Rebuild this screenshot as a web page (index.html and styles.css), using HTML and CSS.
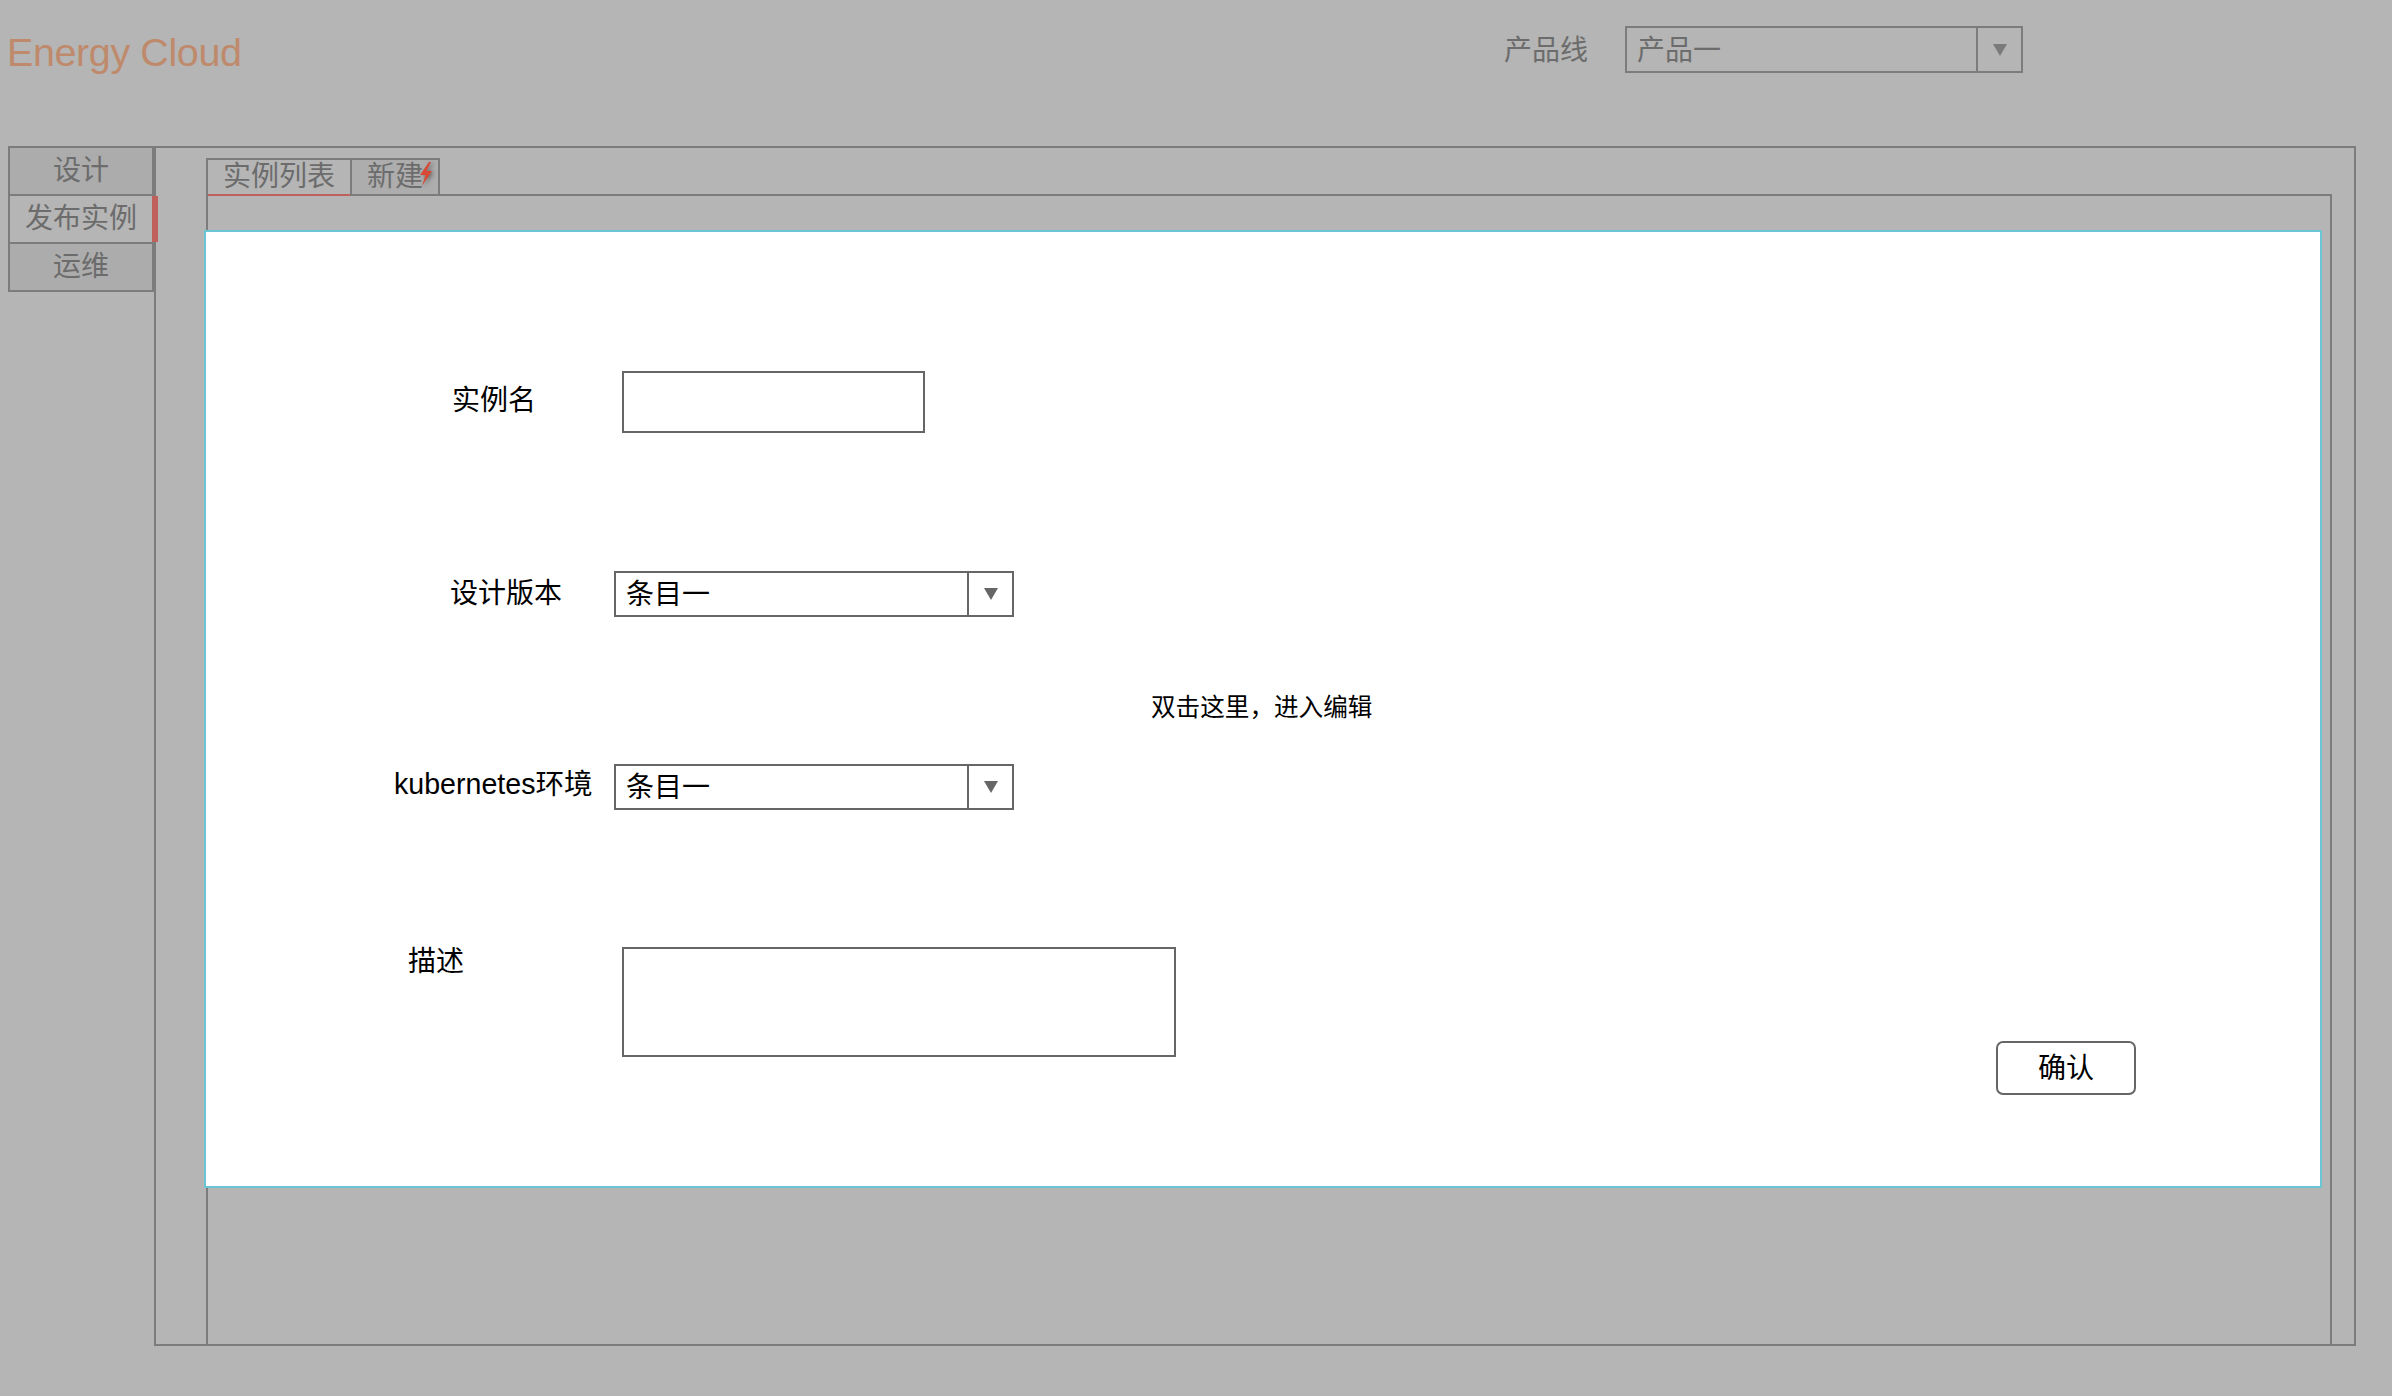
FILE: index.html
```html
<!DOCTYPE html>
<html lang="zh-CN">
<head>
<meta charset="utf-8">
<title>Energy Cloud</title>
<link rel="stylesheet" href="styles.css">
</head>
<body>
<div class="page">
  <header class="topbar">
    <div class="logo">Energy Cloud</div>
    <div class="product">
      <span class="product-label">产品线</span>
      <div class="select select--header">
        <span class="select-value">产品一</span>
        <span class="select-btn"></span>
      </div>
    </div>
  </header>
  <div class="main-row">
    <nav class="sidenav">
      <div class="nav-item">设计</div>
      <div class="nav-item nav-item--active">发布实例</div>
      <div class="nav-item">运维</div>
    </nav>
    <main class="frame">
      <div class="tabs">
        <div class="tab tab--active">实例列表</div>
        <div class="tab tab--new">新建<svg class="bolt" width="16" height="24" viewBox="0 0 16 24"><polygon points="11,0 2,13 7.5,13 4,24 14,9 8.5,9 13,0" fill="#d64a36"/></svg></div>
      </div>
      <div class="panel">
        <div class="dialog">
          <div class="row row--name">
            <span class="label">实例名</span>
            <div class="input"></div>
          </div>
          <div class="row row--version">
            <span class="label">设计版本</span>
            <div class="select select--form">
              <span class="select-value">条目一</span>
              <span class="select-btn"></span>
            </div>
          </div>
          <div class="hint">双击这里，进入编辑</div>
          <div class="row row--k8s">
            <span class="label label--latin">kubernetes环境</span>
            <div class="select select--form">
              <span class="select-value">条目一</span>
              <span class="select-btn"></span>
            </div>
          </div>
          <div class="row row--desc">
            <span class="label">描述</span>
            <div class="textarea"></div>
            <button class="confirm" type="button">确认</button>
          </div>
        </div>
      </div>
    </main>
  </div>
</div>
</body>
</html>
```
FILE: styles.css
```css
html, body {
  margin: 0;
  padding: 0;
}
body {
  background: #b5b5b5;
  font-family: "Noto Sans CJK SC", sans-serif;
  width: 2392px;
  height: 1396px;
  overflow: hidden;
}
.page {
  display: flex;
  flex-direction: column;
}

/* ---------- top bar ---------- */
.topbar {
  display: flex;
  align-items: flex-start;
  height: 146px;
  box-sizing: border-box;
  padding: 0 369px 0 7px;
}
.logo {
  font-family: "Liberation Sans", Arial, sans-serif;
  font-size: 39.5px;
  letter-spacing: -0.4px;
  line-height: 45px;
  color: #bf8a6c;
  margin-top: 30px;
}
.product {
  margin-left: auto;
  margin-top: 26px;
  display: flex;
  align-items: center;
  gap: 37px;
}
.product-label {
  font-size: 28px;
  line-height: 28px;
  color: #6c6c6c;
  margin-bottom: 4px;
}

/* ---------- select ---------- */
.select {
  display: flex;
  box-sizing: border-box;
  border: 2px solid #666;
  background: #fff;
  color: #000;
}
.select-value {
  flex: 1;
  display: flex;
  align-items: center;
  padding-left: 10px;
  font-size: 28px;
  line-height: 28px;
  padding-bottom: 4px;
}
.select-btn {
  width: 45px;
  box-sizing: border-box;
  border-left: 2px solid #666;
  display: flex;
  align-items: center;
  justify-content: center;
}
.select-btn::before {
  content: "";
  border-left: 7px solid transparent;
  border-right: 7px solid transparent;
  border-top: 12px solid #666;
}
.select--header {
  width: 398px;
  height: 47px;
  background: transparent;
  border-color: #7c7c7c;
  color: #6c6c6c;
}
.select--header .select-btn {
  border-left-color: #7c7c7c;
}
.select--header .select-btn::before {
  border-top-color: #7a7a7a;
}
.select--form {
  width: 400px;
  height: 46px;
}

/* ---------- layout ---------- */
.main-row {
  display: flex;
  align-items: flex-start;
  padding-left: 8px;
}
.sidenav {
  width: 146px;
  box-sizing: border-box;
  border: 2px solid #7c7c7c;
  border-bottom: none;
}
.nav-item {
  position: relative;
  height: 48px;
  box-sizing: border-box;
  border-bottom: 2px solid #7c7c7c;
  background: #acacac;
  color: #6c6c6c;
  font-size: 28px;
  line-height: 40px;
  text-align: center;
}
.nav-item--active {
  background: #b5b5b5;
}
.nav-item--active::after {
  content: "";
  position: absolute;
  left: 100%;
  top: 0;
  bottom: 0;
  width: 6px;
  background: #c0605d;
}

.frame {
  width: 2202px;
  height: 1200px;
  box-sizing: border-box;
  border: 2px solid #7c7c7c;
  padding: 10px 22px 0 50px;
  display: flex;
  flex-direction: column;
}
.tabs {
  display: flex;
  height: 36px;
}
.tab {
  position: relative;
  box-sizing: border-box;
  height: 36px;
  border: 2px solid #7c7c7c;
  border-bottom: none;
  font-size: 28px;
  line-height: 28px;
  color: #6c6c6c;
  text-align: center;
}
.tab--active {
  width: 146px;
}
.tab--active::after {
  content: "";
  position: absolute;
  left: 0;
  right: 0;
  bottom: -2px;
  height: 2px;
  background: #c0605d;
  z-index: 2;
}
.tab--new {
  width: 90px;
  margin-left: -2px;
  background: #adadad;
}
.bolt {
  position: absolute;
  right: 4px;
  top: 2px;
  width: 16px;
  height: 24px;
  filter: drop-shadow(2px 1px 2px rgba(60, 60, 60, 0.6));
}
.panel {
  flex: 1;
  border: 2px solid #7c7c7c;
  border-bottom: none;
}

/* ---------- dialog ---------- */
.dialog {
  margin: 34px 0 0 -4px;
  width: 2118px;
  height: 958px;
  box-sizing: border-box;
  border: 2px solid #6ac5d7;
  background: #fff;
  display: flex;
  flex-direction: column;
  color: #000;
}
.row {
  display: flex;
  align-items: flex-start;
}
.label {
  font-size: 28px;
  line-height: 28px;
  flex: none;
}
.label--latin {
  font-family: "Liberation Sans", "Noto Sans CJK SC", sans-serif;
  font-size: 28.6px;
}
.row--name {
  margin-top: 139px;
}
.row--name .label {
  margin: 13px 0 0 246px;
  width: 170px;
}
.row--version {
  margin-top: 138px;
}
.row--version .label {
  margin: 6px 0 0 244px;
  width: 164px;
}
.row--k8s {
  margin-top: 47px;
}
.row--k8s .label {
  margin: 6px 0 0 188px;
  width: 220px;
}
.row--desc {
  margin-top: 137px;
  padding-right: 184px;
}
.row--desc .label {
  margin: -2px 0 0 202px;
  width: 214px;
}
.input {
  width: 303px;
  height: 62px;
  box-sizing: border-box;
  border: 2px solid #666;
}
.textarea {
  width: 554px;
  height: 110px;
  box-sizing: border-box;
  border: 2px solid #666;
}
.hint {
  margin: 76px 0 0 945px;
  font-size: 24.6px;
  line-height: 24px;
}
.confirm {
  margin: 94px 0 0 auto;
  width: 140px;
  height: 54px;
  box-sizing: border-box;
  border: 2px solid #666;
  border-radius: 7px;
  background: #fff;
  font-family: "Noto Sans CJK SC", sans-serif;
  font-size: 28px;
  line-height: 28px;
  color: #000;
  padding: 0 0 4px;
}
```
